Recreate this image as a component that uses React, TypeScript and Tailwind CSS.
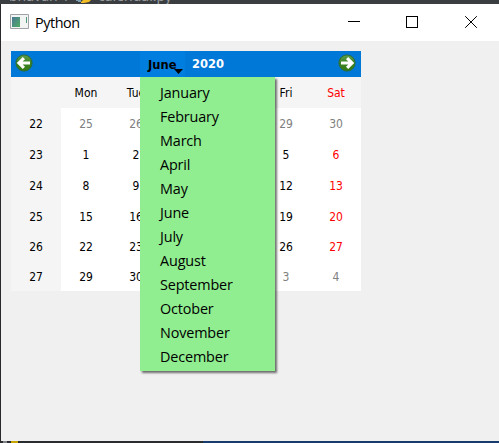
const months = ['January', 'February', 'March', 'April', 'May', 'June', 'July', 'August', 'September', 'October', 'November', 'December'];
const days = ['', 'Mon', 'Tue', 'Wed', 'Thu', 'Fri', 'Sat'];
const weeks = [
  [22, 25, 26, 27, 28, 29, 30],
  [23, 1, 2, 3, 4, 5, 6],
  [24, 8, 9, 10, 11, 12, 13],
  [25, 15, 16, 17, 18, 19, 20],
  [26, 22, 23, 24, 25, 26, 27],
  [27, 29, 30, 1, 2, 3, 4],
];

function Arrow({ right = false }: { right?: boolean }) {
  return (
    <svg width="18" height="18" viewBox="0 0 18 18" className={right ? 'rotate-180' : ''}>
      <defs>
        <linearGradient id={right ? 'gr' : 'gl'} x1="0" y1={right ? 1 : 0} x2="0" y2={right ? 0 : 1}>
          <stop offset="0" stopColor="#5c9e4e" />
          <stop offset=".5" stopColor="#3a8423" />
          <stop offset="1" stopColor="#337b14" />
        </linearGradient>
      </defs>
      <circle cx="9" cy="9" r="8.1" fill={right ? 'url(#gr)' : 'url(#gl)'} stroke="#2c6c3c" strokeWidth="1" />
      <path d="M1.8 9 7.8 3 10 5.2 7.7 7.4H15V10.6H7.7L10 12.8 7.8 15Z" fill="#fff" />
    </svg>
  );
}

function cellColor(row: number, col: number) {
  if (col === 0) return 'bg-[#f5f5f5] text-black';
  if ((row === 0) || (row === 5 && col > 2)) return 'bg-white text-[#808080]';
  return col === 6 ? 'bg-white text-[#ff0000]' : 'bg-white text-black';
}

export default function App() {
  return (
    <div className="flex h-[443px] w-[499px] flex-col overflow-hidden bg-[#2b2c2e]">
      <div className="flex h-1 shrink-0 items-start overflow-hidden bg-[#3a3e40] font-['Noto_Sans'] text-[14px] leading-none text-[#9a9da0]">
        <span className="-mt-[11px] ml-[9px] w-[66px] whitespace-nowrap">bhavan&nbsp; /</span>
        <svg width="16" height="4" viewBox="0 0 16 4"><path d="M1 0h5v2H3V1H1Z" fill="#7c9db0" /><path d="M8 0h8l-2 2-5 1H6V2Z" fill="#f2bd24" /></svg>
        <span className="-mt-[11px] ml-[7px]">calendar.py</span>
      </div>
      <div className="flex min-h-0 flex-1 flex-col border-l border-[#29292b] bg-[#f0f0f0]">
        <div className="flex h-[37px] shrink-0 items-center bg-white">
          <svg className="-mt-[3px] ml-[9px]" width="19" height="15" viewBox="0 0 19 15">
            <defs><linearGradient id="app" x1="0" y1="0" x2="1" y2="1"><stop stopColor="#4b7796" /><stop offset="1" stopColor="#4fad63" /></linearGradient></defs>
            <path d="M.5.5h18v14H.5Z" fill="#f2f3f3" stroke="#a0a4a9" />
            <path d="M2 3h8v10H2Z" fill="url(#app)" />
            <path d="M16 3h1v6h-1Z" fill="#4e9a78" />
          </svg>
          <span className="ml-[6px] w-[313px] font-['Open_Sans','Noto_Sans',sans-serif] text-[14.4px] tracking-[-0.45px] text-black">Python</span>
          <svg width="130" height="12" viewBox="0 0 130 12" fill="none" stroke="#000" className="-mt-[1px]" shapeRendering="crispEdges">
            <path d="M0 5.5h12" /><path d="M58.5.5h11v11h-11Z" />
            <path d="m117.2.2 11.6 11.6m0-11.6-11.6 11.6" shapeRendering="geometricPrecision" />
          </svg>
        </div>
        <div className="relative ml-[10px] mt-[10px] w-[350px] font-['DejaVu_Sans_Condensed','DejaVu_Sans',sans-serif] text-[12px]">
          <div className="flex h-[26px] bg-[#0078d7] pl-1 pr-[5px] pt-[3px]">
            <Arrow />
            <div className="relative -mt-[3px] ml-[107px] h-[26px] w-[45px] bg-[#007ee0] pl-[8px] pt-[5px] font-['DejaVu_Sans',sans-serif] text-[11.5px] font-bold leading-[18px] text-black">
              June
              <svg className="absolute bottom-[3px] left-[34px]" width="9" height="5" viewBox="0 0 9 5"><path d="M0 0h9L4.5 5Z" fill="#000" /></svg>
            </div>
            <div className="ml-[7px] flex-1 pt-[1px] font-['DejaVu_Sans',sans-serif] text-[11.5px] font-bold leading-[18px] text-white">2020</div>
            <Arrow right />
          </div>
          <div className="grid grid-cols-7 grid-rows-[31px_31px_31px_31px_31px_30px_29px] text-center">
            {days.map((d, i) => (
              <div key={i} className={'flex items-center justify-center bg-[#f5f5f5] ' + (i === 6 ? 'text-[#ff0000]' : 'text-black')}>{d}</div>
            ))}
            {weeks.map((w, r) => w.map((n, c) => (
              <div key={r + '-' + c} className={'flex items-center justify-center ' + cellColor(r, c)}>{n}</div>
            )))}
          </div>
          <div className="absolute left-[129px] top-[26px] h-[294px] w-[135px] bg-[#90ee90] pl-5 pt-[4px] font-['Open_Sans','Noto_Sans',sans-serif] text-[14.4px] leading-6 tracking-[-0.15px] text-black shadow-[2px_2px_2px_rgba(0,0,0,0.55)]">
            {months.map((m) => <div key={m} className="h-6">{m}</div>)}
          </div>
        </div>
      </div>
      <div className="flex h-[2px] shrink-0">
        <span className="ml-[3px] w-1 bg-[#808488]" /><span className="ml-[4px] w-[7px] bg-[#c7a600]" />
        <span className="ml-[185px] flex-1 bg-[#173b6c]" />
      </div>
    </div>
  );
}
